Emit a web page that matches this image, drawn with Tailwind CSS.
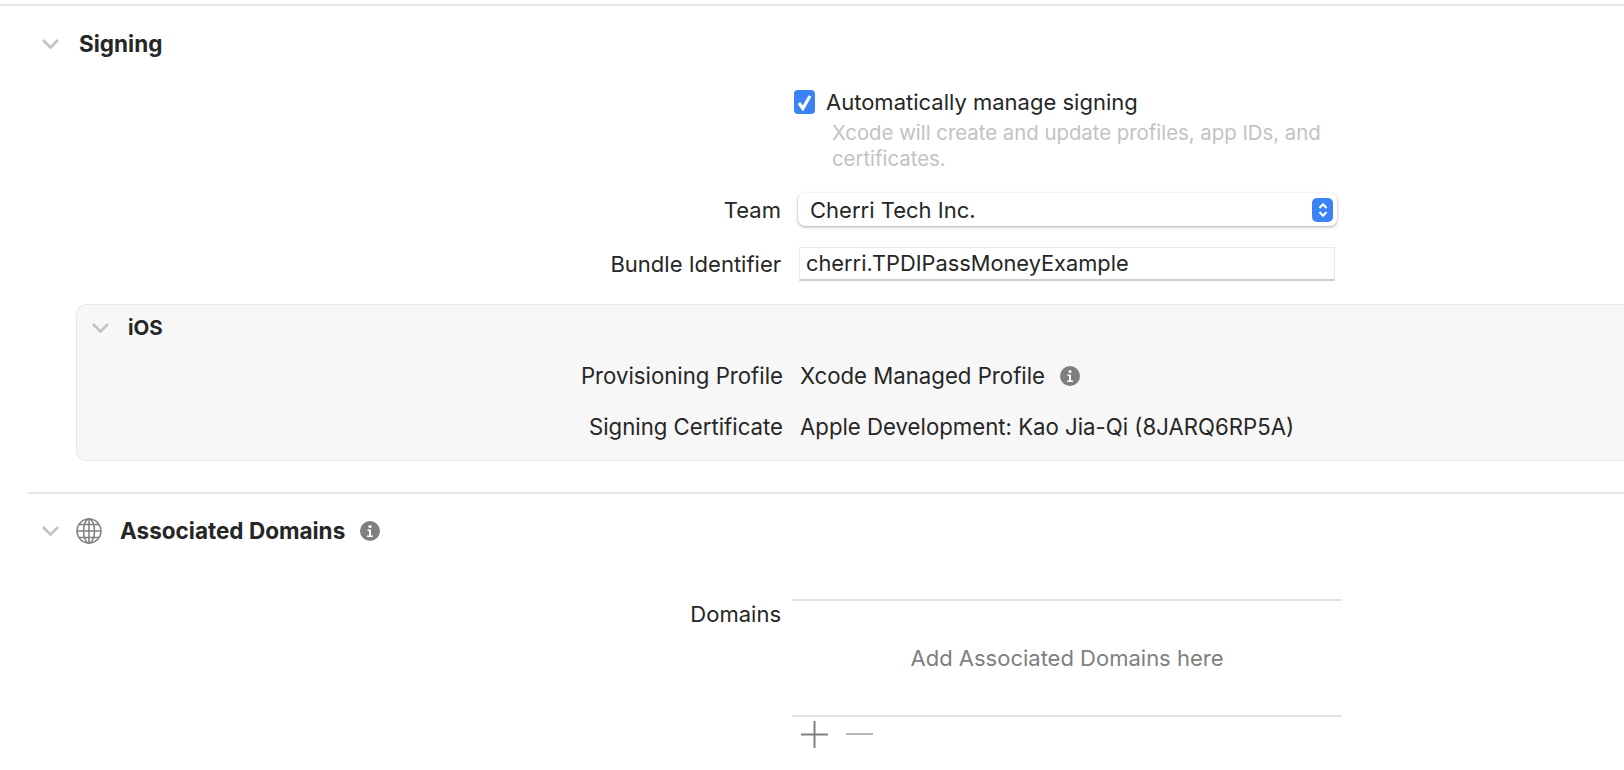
<!DOCTYPE html>
<html lang="en">
  <head>
    <meta charset="UTF-8" />
    <title>Signing &amp; Capabilities</title>
    <script src="https://cdn.jsdelivr.net/npm/@tailwindcss/browser@4"></script>
  </head>
  <body class="bg-white h-[770px] w-[1624px] overflow-hidden font-['Inter','Liberation_Sans',sans-serif] text-[22px] text-[#262626]">
    <div class="pt-1">
      <div class="h-[2px] bg-[#e4e4e4]"></div>

      <!-- Signing -->
      <div class="ml-[28px] pt-[25px]">
        <div class="flex items-center h-[26px]">
          <svg class="ml-[14px] w-[17px] h-[10px]" viewBox="0 0 17 10" fill="none" stroke="#c4c4c4" stroke-width="2.8"><path d="M1 1l7.500 7.500L16 1" /></svg>
          <span class="ml-[20px] font-bold text-[22.500px]">Signing</span>
        </div>

        <div class="ml-[766px] mt-[33px] flex items-center h-[24px]">
          <div class="w-[21px] h-[24px] rounded-[4px] bg-[#3b82f6] flex items-center justify-center">
            <svg class="w-[15px] h-[17px]" viewBox="0 0 15 17" fill="none" stroke="#fff" stroke-width="3.200"><path d="M2 9l3.800 5.500L13 2" /></svg>
          </div>
          <span class="ml-[11px]">Automatically manage signing</span>
        </div>
        <p class="ml-[804px] mt-[6px] w-[500px] text-[20.350px] leading-[26px] text-[#c2c2c2]">Xcode will create and update profiles, app IDs, and certificates.</p>

        <div class="mt-[21px] flex items-center h-[33px]">
          <span class="w-[753px] text-right pt-px">Team</span>
          <div class="ml-[17px] w-[539px] h-[33px] rounded-[7px] bg-white shadow-[0_1px_3px_rgba(0,0,0,0.35)] flex items-center justify-between pl-[12px] pr-[4px]">
            <span class="pt-px">Cherri Tech Inc.</span>
            <div class="w-[21px] h-[24px] rounded-[5px] bg-[#3b82f6] flex items-center justify-center">
              <svg class="w-[10px] h-[16px]" viewBox="0 0 10 16" fill="none" stroke="#fff" stroke-width="2"><path d="M1.500 6L5 2.200 8.500 6M1.500 10L5 13.800 8.500 10" /></svg>
            </div>
          </div>
        </div>

        <div class="mt-[21px] flex items-center h-[34px]">
          <span class="w-[753px] text-right">Bundle Identifier</span>
          <div class="ml-[18px] w-[536px] h-[34px] bg-white border border-[#eaeaea] border-b-2 border-b-[#cfcfcf] flex items-center pl-[6px] text-[21.800px]">cherri.TPDIPassMoneyExample</div>
        </div>

        <!-- iOS -->
        <div class="ml-[48px] mt-[23px] h-[157px] rounded-l-[10px] bg-[#f7f7f7] border border-r-0 border-[#e8e8e8]">
          <div class="flex items-center h-[46px]">
            <svg class="ml-[15px] w-[17px] h-[10px]" viewBox="0 0 17 10" fill="none" stroke="#c4c4c4" stroke-width="2.8"><path d="M1 1l7.500 7.500L16 1" /></svg>
            <span class="ml-[19px] font-bold text-[20.500px]">iOS</span>
          </div>
          <div class="mt-[10px] flex items-center h-[30px] text-[22.200px]">
            <span class="w-[706px] text-right">Provisioning Profile</span>
            <span class="ml-[17px]">Xcode Managed Profile</span>
            <svg class="ml-[15px] w-[20px] h-[20px]" viewBox="0 0 20 20"><circle cx="10" cy="10" r="10" fill="#7f7f7f" /><circle cx="10" cy="5.500" r="1.600" fill="#fff" /><path d="M7.500 8.500h3.500v6h2v1.500H7v-1.500h2v-4.500H7.500z" fill="#fff" /></svg>
          </div>
          <div class="mt-[21px] flex items-center h-[30px] text-[22.200px]">
            <span class="w-[706px] text-right">Signing Certificate</span>
            <span class="ml-[17px]">Apple Development: Kao Jia-Qi (8JARQ6RP5A)</span>
          </div>
        </div>

        <div class="mt-[31px] h-[2px] bg-[#e4e4e4]"></div>

        <!-- Associated Domains -->
        <div class="mt-[24px] flex items-center h-[26px]">
          <svg class="ml-[14px] w-[17px] h-[10px]" viewBox="0 0 17 10" fill="none" stroke="#c4c4c4" stroke-width="2.8"><path d="M1 1l7.500 7.500L16 1" /></svg>
          <svg class="ml-[17px] w-[26px] h-[26px]" viewBox="0 0 26 26" fill="none" stroke="#7f7f7f" stroke-width="1.500"><circle cx="13" cy="13" r="12" /><ellipse cx="13" cy="13" rx="5.500" ry="12" /><path d="M13 1v24M1 13h24M3 6.500h20M3 19.500h20" /></svg>
          <span class="ml-[18px] font-bold text-[22.500px]">Associated Domains</span>
          <svg class="ml-[15px] w-[20px] h-[20px]" viewBox="0 0 20 20"><circle cx="10" cy="10" r="10" fill="#7f7f7f" /><circle cx="10" cy="5.500" r="1.600" fill="#fff" /><path d="M7.500 8.500h3.500v6h2v1.500H7v-1.500h2v-4.500H7.500z" fill="#fff" /></svg>
        </div>

        <div class="mt-[55px] flex">
          <span class="w-[753px] text-right -mt-[1px]">Domains</span>
          <div class="ml-[11px] w-[550px]">
            <div class="h-[118px] border-y-2 border-[#e4e4e4] flex items-center justify-center text-[#808080]">Add Associated Domains here</div>
            <div class="flex items-center h-[34px] pl-[9px]">
              <svg class="w-[27px] h-[27px]" viewBox="0 0 27 27" fill="none" stroke="#7f7f7f" stroke-width="2"><path d="M13.500 0v27M0 13.500h27" /></svg>
              <svg class="ml-[18px] w-[27px] h-[2px]" viewBox="0 0 27 2" fill="none" stroke="#b9b9b9" stroke-width="2"><path d="M0 1h27" /></svg>
            </div>
          </div>
        </div>
      </div>
    </div>
  </body>
</html>
